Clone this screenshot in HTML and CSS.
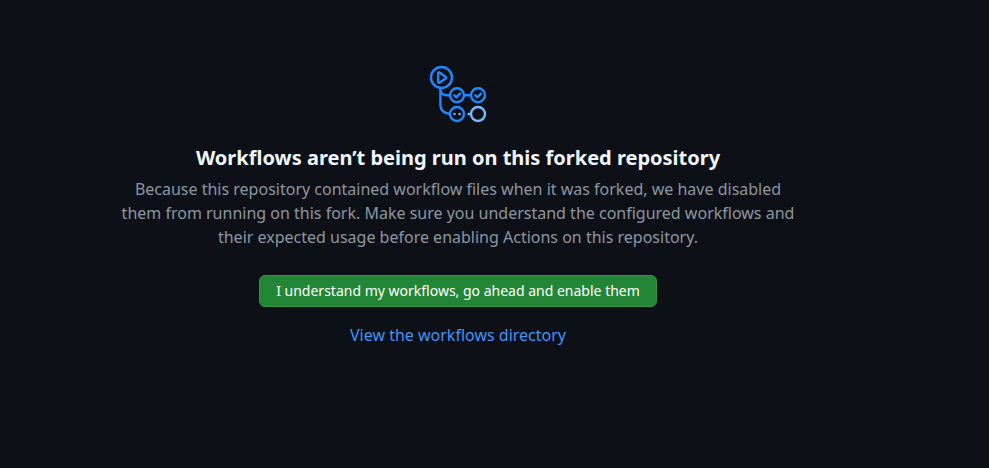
FILE: index.html
```html
<!DOCTYPE html>
<html lang="en">
<head>
<meta charset="utf-8">
<title>Actions</title>
<link rel="stylesheet" href="styles.css">
</head>
<body>
<main class="blankslate">
<svg class="icon" width="58" height="58" viewBox="0 0 58 58" fill="none" stroke="#2088ff" stroke-width="2.4" stroke-linecap="round" stroke-linejoin="round">
<circle cx="12.5" cy="12.5" r="10.5"/>
<path d="M9.2 8.2v8.8a.8.8 0 0 0 1.3.7l6.4-4.5a.8.8 0 0 0 0-1.3l-6.4-4.4a.8.8 0 0 0-1.3.7z"/>
<path d="M11.4 23.5v16.5c0 5 3.5 8.7 9 8.7M11.4 23.5c0 4 2.5 6.7 6.5 6.7h2.5M35.5 30.2h6"/>
<circle cx="28" cy="30.2" r="7"/>
<circle cx="49" cy="30.2" r="7"/>
<circle cx="28" cy="49" r="7"/>
<path d="M25.3 30.3l2 2 3.7-3.7M46.3 30.3l2 2 3.7-3.7"/>
<g stroke="#79b8ff"><circle cx="49" cy="49" r="7"/><path d="M39.6 49h2"/></g>
<g fill="#79b8ff" stroke="none"><circle cx="25.5" cy="49" r="1.25"/><circle cx="30.5" cy="49" r="1.25"/></g>
</svg>
<h1 class="title">Workflows aren’t being run on this forked repository</h1>
<p class="description">Because this repository contained workflow files when it was forked, we have disabled them from running on this fork. Make sure you understand the configured workflows and their expected usage before enabling Actions on this repository.</p>
<button class="button">I understand my workflows, go ahead and enable them</button>
<a class="link" href="#">View the workflows directory</a>
</main>
</body>
</html>
```
FILE: styles.css
```css
body {
  margin: 0;
  background: #0d1117;
  font-family: "Noto Sans", sans-serif;
}
.blankslate {
  display: flex;
  flex-direction: column;
  align-items: center;
  width: 680px;
  margin-left: 118px;
  padding-top: 65px;
}
.icon { display: block; }
.title {
  margin: 20px 0 4px;
  color: #f0f6fc;
  font-size: 20px;
  font-weight: 700;
  line-height: 30px;
}
.description {
  margin: 0;
  color: #8d96a0;
  font-size: 16px;
  line-height: 24px;
  text-align: center;
}
.button {
  box-sizing: border-box;
  height: 32px;
  margin: 26px 0 16px;
  padding: 0 16px;
  border: 1px solid #38924a;
  border-radius: 6px;
  background: #238636;
  color: #fff;
  font: 400 14px/20px "Noto Sans", sans-serif;
}
.link {
  color: #4493f8;
  font-size: 16px;
  line-height: 24px;
  text-decoration: none;
}
```
